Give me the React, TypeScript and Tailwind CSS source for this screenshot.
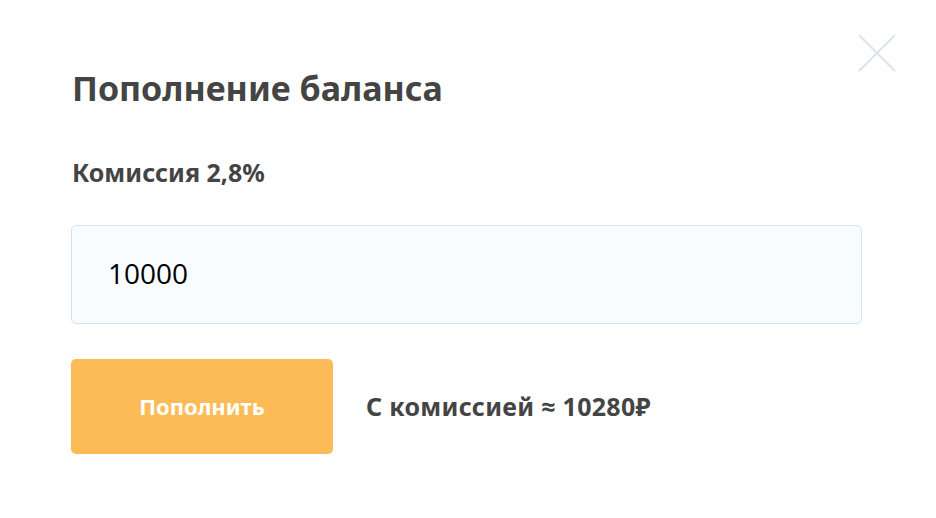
import React from "react";

export default function App() {
  return (
    <div className="w-[936px] h-[518px] bg-white relative" style={{ fontFamily: '"Noto Sans", "Open Sans", sans-serif' }}>
      <button className="absolute left-[856px] top-[33px] w-[42px] h-[40px]" aria-label="close">
        <svg width="42" height="40" viewBox="0 0 42 40">
          <path d="M3 2 L39 38 M39 2 L3 38" stroke="#dde5ec" strokeWidth="2.2" fill="none" />
        </svg>
      </button>
      <div className="pl-[72px] pr-[74px] pt-[68px] flex flex-col">
        <h1 className="text-[34px] leading-[40px] font-bold text-[#444444]">Пополнение баланса</h1>
        <div className="mt-[50px] text-[25px] leading-[28px] font-bold text-[#444444]">Комиссия 2,8%</div>
        <div className="mt-[39px] ml-[-1px] h-[99px] rounded-[5px] border border-[#cfe6fa] bg-[#f9fcff] flex items-center pl-[36px]">
          <span className="text-[28px] leading-[36px] text-black mt-[-3px]" style={{ fontFamily: '"Open Sans", sans-serif' }}>10000</span>
        </div>
        <div className="mt-[35px] ml-[-1px] flex items-center">
          <div className="w-[262px] h-[95px] rounded-[5px] bg-[#fdbb57] flex items-center justify-center text-white text-[22px] font-bold">
            Пополнить
          </div>
          <div className="ml-[33px] text-[25px] font-bold text-[#444444] tracking-[0.3px]">С комиссией ≈ 10280₽</div>
        </div>
      </div>
    </div>
  );
}
